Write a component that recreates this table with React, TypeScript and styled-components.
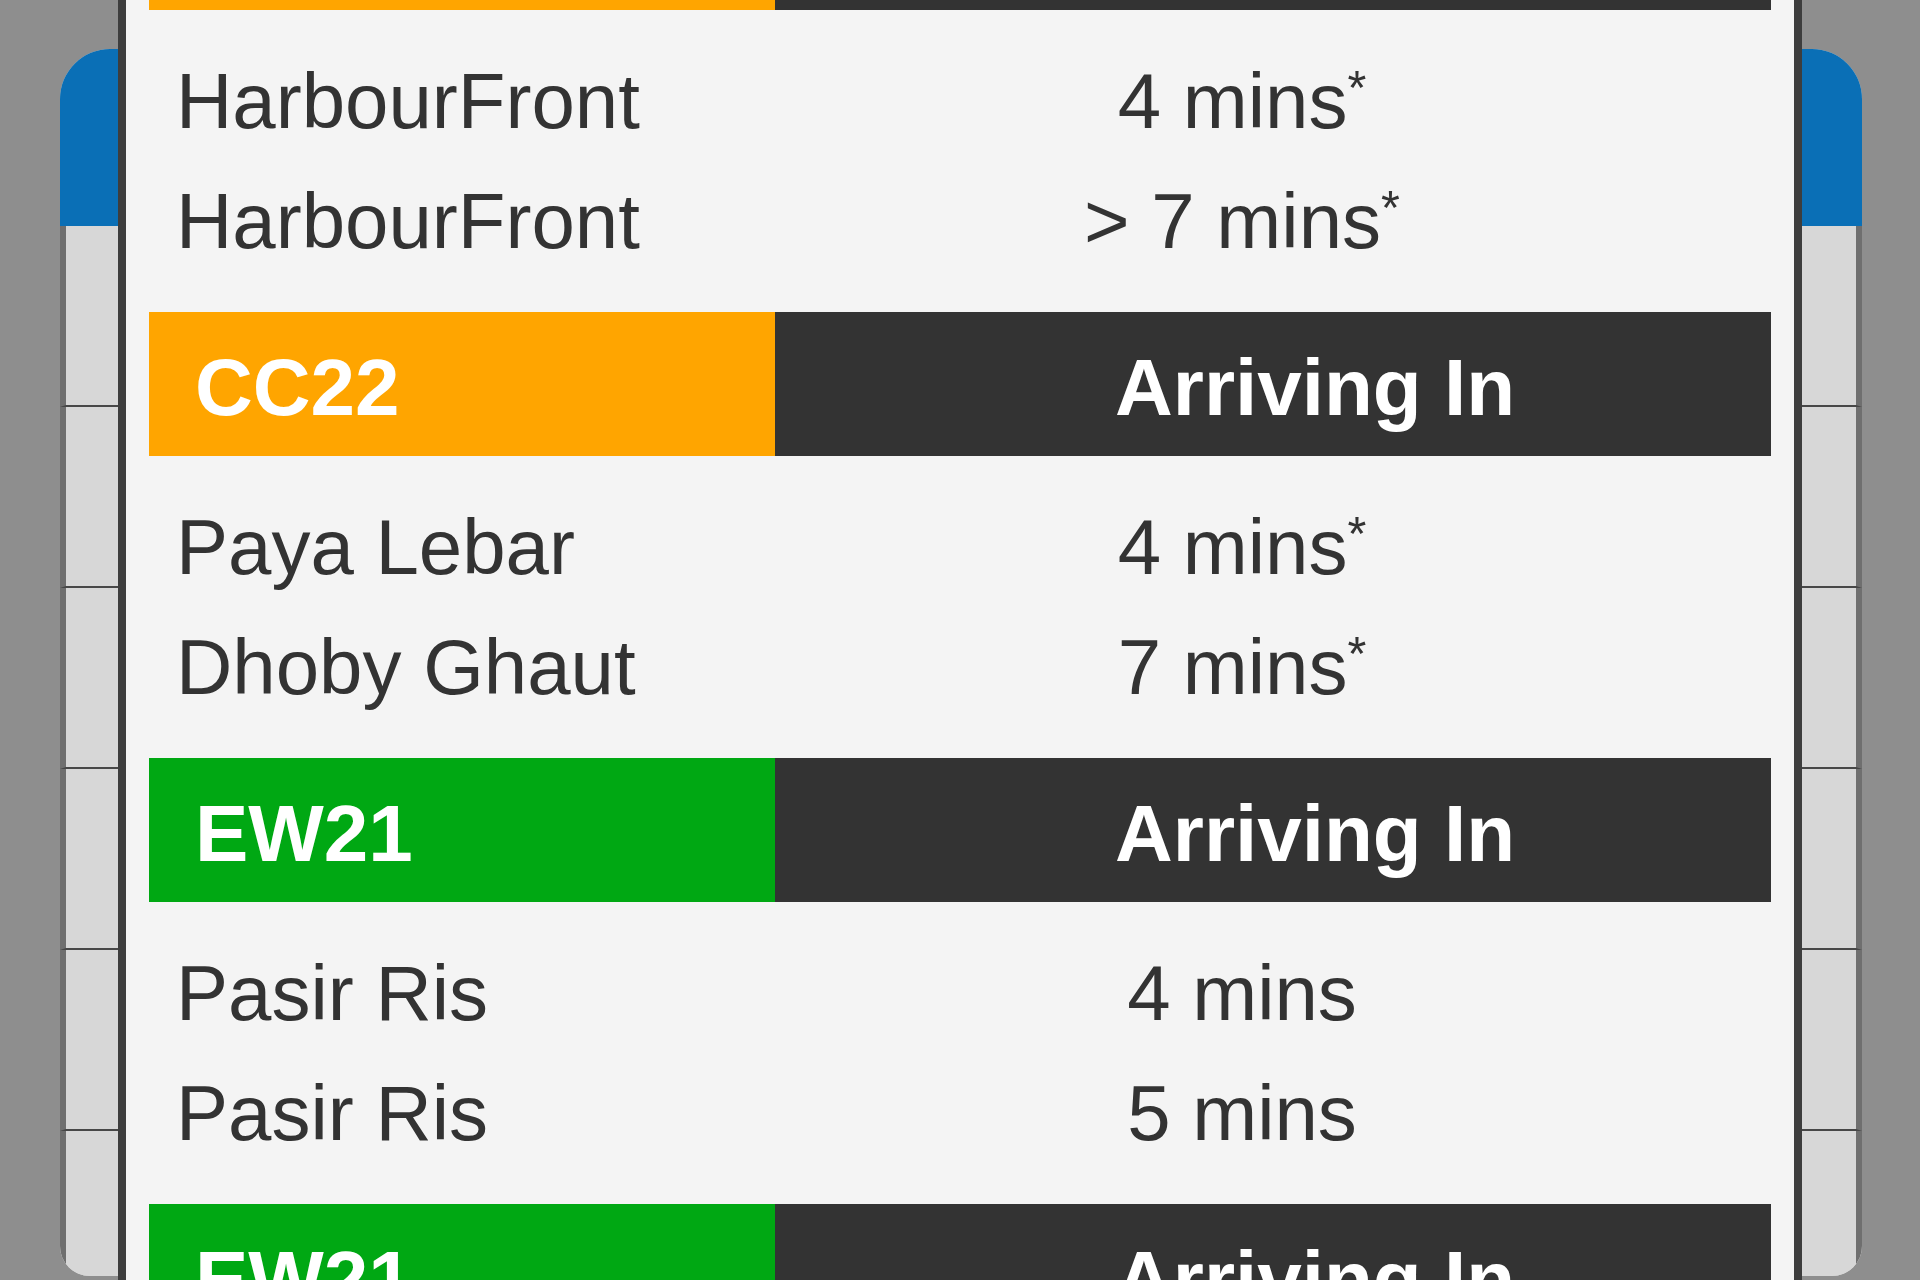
import styled, { createGlobalStyle } from 'styled-components';

type Line = 'cc' | 'ew';

const lineColors: Record<Line, string> = {
  cc: '#ffa500',
  ew: '#00a813',
};

type Arrival = { dest: string; time: string; estimate?: boolean };
type Platform = { code: string; line: Line; arrivals: Arrival[] };

const platforms: Platform[] = [
  {
    code: 'CC22',
    line: 'cc',
    arrivals: [
      { dest: 'HarbourFront', time: '4 mins', estimate: true },
      { dest: 'HarbourFront', time: '> 7 mins', estimate: true },
    ],
  },
  {
    code: 'CC22',
    line: 'cc',
    arrivals: [
      { dest: 'Paya Lebar', time: '4 mins', estimate: true },
      { dest: 'Dhoby Ghaut', time: '7 mins', estimate: true },
    ],
  },
  {
    code: 'EW21',
    line: 'ew',
    arrivals: [
      { dest: 'Pasir Ris', time: '4 mins' },
      { dest: 'Pasir Ris', time: '5 mins' },
    ],
  },
  { code: 'EW21', line: 'ew', arrivals: [] },
];

const GlobalStyle = createGlobalStyle`
  html, body {
    margin: 0;
    padding: 0;
    background: #8e8e8e;
    overflow: hidden;
  }
  body {
    font-family: "Liberation Sans", Arial, Helvetica, sans-serif;
  }
`;

const Page = styled.div`
  position: relative;
  height: 1280px;
  overflow: hidden;
  padding: 49px 0 0 60px;
  box-sizing: border-box;
`;

/* the station screen sitting behind the arrivals popup */
const BackCard = styled.div`
  width: 1802px;
  height: 1227px;
  border-radius: 50px 50px 30px 30px;
  overflow: hidden;
  background: #d7d7d7;
`;

const BackHeader = styled.div`
  height: 177px;
  background: #0a6fb6;
`;

const BackRow = styled.div`
  height: 179px;
  background: #d7d7d7;
  border-left: 6px solid #6f6f6f;
  border-right: 6px solid #6f6f6f;
  border-bottom: 2px solid #474747;
`;

const Popup = styled.div`
  position: absolute;
  top: -160px;
  bottom: -40px;
  left: 118px;
  width: 1684px;
  box-sizing: border-box;
  padding: 18px 23px 0;
  background: #f4f4f4;
  border: 8px solid #3d3d3d;
  overflow: hidden;
`;

const Bar = styled.div`
  display: grid;
  grid-template-columns: 626px 1fr;
  height: 144px;
  font-size: 80px;
  font-weight: 700;
  color: #fff;
`;

const CodeCell = styled.div<{ $line: Line }>`
  background: ${(p) => lineColors[p.$line]};
  padding: 8px 0 0 46px;
  line-height: 136px;
`;

const TitleCell = styled.div`
  background: #333333;
  padding: 8px 0 0 84px;
  line-height: 136px;
  text-align: center;
`;

const Arrivals = styled.div`
  padding: 31px 0;
`;

const ArrivalRow = styled.div`
  display: grid;
  grid-template-columns: 626px 934px 1fr;
  height: 120px;
  line-height: 120px;
  font-size: 78px;
  color: #333;
`;

const Dest = styled.div`
  padding-left: 27px;
  white-space: nowrap;
`;

const Time = styled.div`
  text-align: center;
  white-space: nowrap;
`;

const Star = styled.span`
  font-size: 0.62em;
  vertical-align: 0.5em;
  line-height: 0;
`;

export default function App() {
  return (
    <>
      <GlobalStyle />
      <Page>
        <BackCard>
          <BackHeader />
          {Array.from({ length: 6 }).map((_, i) => (
            <BackRow key={i} />
          ))}
        </BackCard>
        <Popup>
          {platforms.map((p, i) => (
            <div key={i}>
              <Bar>
                <CodeCell $line={p.line}>{p.code}</CodeCell>
                <TitleCell>Arriving In</TitleCell>
              </Bar>
              {p.arrivals.length > 0 && (
                <Arrivals>
                  {p.arrivals.map((a, j) => (
                    <ArrivalRow key={j}>
                      <Dest>{a.dest}</Dest>
                      <Time>
                        {a.time}
                        {a.estimate && <Star>*</Star>}
                      </Time>
                      <div />
                    </ArrivalRow>
                  ))}
                </Arrivals>
              )}
            </div>
          ))}
        </Popup>
      </Page>
    </>
  );
}
